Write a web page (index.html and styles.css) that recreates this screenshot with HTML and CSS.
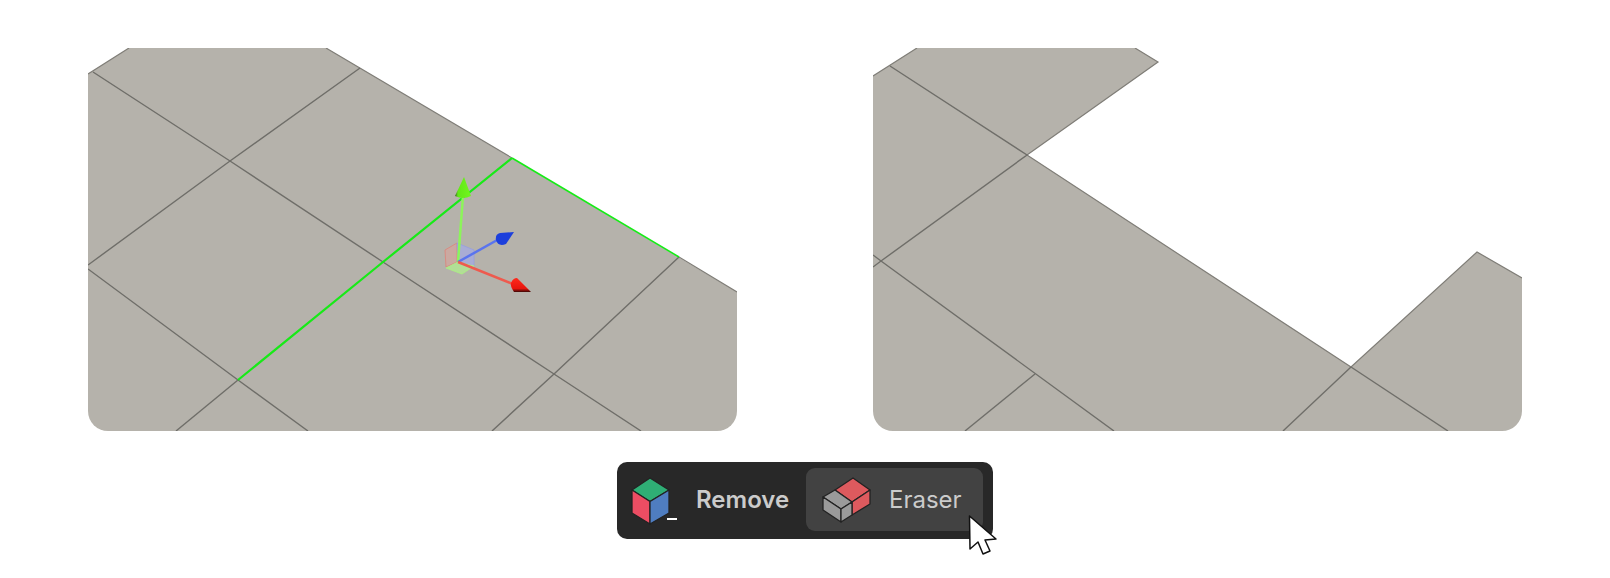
FILE: index.html
```html
<!DOCTYPE html>
<html lang="en">
<head>
    <meta charset="UTF-8">
    <meta name="viewport" content="width=device-width, initial-scale=1.0">
    <title>Remove with Eraser</title>
    <link rel="stylesheet" href="styles.css">
</head>
<body>
    <div class="views">
        <!-- before: edge picked, gizmo showing -->
        <svg class="view" viewBox="88 48 649 383">
            <defs>
                <linearGradient id="coneRed" x1="0" y1="0" x2="0" y2="1">
                    <stop offset="0" stop-color="#ff2a1c"/>
                    <stop offset="0.75" stop-color="#e8160e"/>
                    <stop offset="1" stop-color="#3a0806"/>
                </linearGradient>
                <linearGradient id="coneGreen" x1="1" y1="0" x2="0" y2="0">
                    <stop offset="0" stop-color="#72f51e"/>
                    <stop offset="0.82" stop-color="#62e818"/>
                    <stop offset="1" stop-color="#3a5a22"/>
                </linearGradient>
            </defs>
            <path class="sheet" d="M88 74 L129 48 H326 L737 292 V411 A20 20 0 0 1 717 431 H108 A20 20 0 0 1 88 411 Z"/>
            <path class="edge" d="M88 74 L129 48 M326 48 L512 158 M679 257 L737 292"/>
            <path class="grid" d="M93 72 L230 161 L383 262 L554 374 L641 431"/>
            <path class="grid" d="M360 68 L230 161 L88 265"/>
            <path class="grid" d="M88 269 L238 380 L308 431"/>
            <path class="grid" d="M238 380 L176 431"/>
            <path class="grid" d="M679 257 L554 374 L492 431"/>
            <path class="picked" d="M512 158 L383 262 L238 380"/>
            <path class="picked thin" d="M512 158 L679 257"/>

            <path class="plane plane-red" d="M445 250 L457 243 V262 L446 267 Z"/>
            <path class="plane plane-blue" d="M457 243 L474 250 V266 L458 262 Z"/>
            <path class="plane plane-green" d="M458 262 L474 266 L462 274 L446 268 Z"/>
            <path class="axis axis-green" d="M458 262 L463 196"/>
            <path class="axis axis-blue" d="M458 262 L499 239"/>
            <path class="axis axis-red" d="M458 262 L513 284"/>
            <path fill="url(#coneGreen)" d="M464 177 L471 196 Q463 200 455 196 Z"/>
            <path class="cone-blue" d="M500 233 L514 232 L506 244 Q498 247 496 240 Q495 234 500 233 Z"/>
            <path fill="url(#coneRed)" d="M517 278 L531 292 H514 Q510 286 511 283 Q513 278 517 278 Z"/>
        </svg>

        <!-- after: face gone -->
        <svg class="view" viewBox="873 48 649 383">
            <path class="sheet" d="M873 76 L917 48 H1135 L1158 62 L1027 155 L1351 367 L1477 252 L1522 278 V411 A20 20 0 0 1 1502 431 H893 A20 20 0 0 1 873 411 Z"/>
            <path class="edge" d="M873 76 L917 48 M1135 48 L1158 62 L1027 155 L1351 367 L1477 252 L1522 278"/>
            <path class="grid" d="M890 66 L1027 155 L881 261 L873 267"/>
            <path class="grid" d="M873 255 L881 261 L1114 431"/>
            <path class="grid" d="M1035 374 L965 431"/>
            <path class="grid" d="M1351 367 L1283 431"/>
            <path class="grid" d="M1351 367 L1448 431"/>
        </svg>
    </div>

    <div class="toolbar">
        <svg class="tool-icon" width="45" height="46" viewBox="632 477 45 46">
            <path class="cube-top" d="M650 477 L669 489 L650 500.500 L632 489 Z"/>
            <path class="cube-left" d="M632 489 L650 500.500 V523 L632 512 Z"/>
            <path class="cube-right" d="M669 489 L650 500.500 V523 L669 512 Z"/>
            <rect class="cube-dash" x="667" y="517" width="10" height="2"/>
        </svg>
        <span class="tool-group">Remove</span>
        <div class="tool-button">
            <svg class="tool-icon" width="47" height="44" viewBox="823 477 47 44">
                <path class="eraser-red" d="M835 489 L853 477 L870 489 L852 501 Z"/>
                <path class="eraser-red" d="M852 501 L870 489 V503 L852 514 Z"/>
                <path class="eraser-grey" d="M823 496 L835 489 L852 501 L841 508 Z"/>
                <path class="eraser-grey" d="M823 496 L841 508 V521 L823 509 Z"/>
                <path class="eraser-grey" d="M841 508 L852 501 V514 L841 521 Z"/>
            </svg>
            <span class="tool-name">Eraser</span>
        </div>
        <svg class="pointer" width="34" height="46" viewBox="965 512 34 46">
            <path d="M969.500 516 L970 549 L978 542 L983 554 L990 551 L985 540 L996 539 Z"/>
        </svg>
    </div>
</body>
</html>
```

FILE: styles.css
```css
*{margin:0;padding:0;box-sizing:border-box}
html,body{height: 100%}
body{
    background-color: #fff;
    font-family: Inter, "Liberation Sans", sans-serif;
    padding-top: 48px;
}
.views{
    display: flex;
    justify-content: center;
    gap: 136px;
}
.view{
    display: block;
    width: 649px;
    height: 383px;
}
.sheet{fill: #b5b2ab; stroke: none}
.edge{fill: none; stroke: #7f7d77; stroke-width: 1.200}
.grid{fill: none; stroke: #6f6e69; stroke-width: 1.400}
.picked{fill: none; stroke: #17ea17; stroke-width: 2.200}
.picked.thin{stroke-width: 1.600}

.plane{stroke-width: 1}
.plane-red{fill: rgba(215,165,155,.65); stroke: rgba(226,125,115,.7)}
.plane-blue{fill: rgba(165,170,225,.75); stroke: rgba(145,155,230,.7)}
.plane-green{fill: rgba(178,232,145,.8); stroke: rgba(170,240,130,.85)}
.axis{fill: none; stroke-width: 2.500}
.axis-green{stroke: #8cf55a}
.axis-blue{stroke: #5a74ee}
.axis-red{stroke: #ee5a4e}
.cone-blue{fill: #1c3fdc}

.toolbar{
    position: relative;
    display: flex;
    align-items: center;
    width: 376px;
    height: 77px;
    margin: 31px auto 0;
    padding: 0 10px 0 15px;
    background-color: #282828;
    border-radius: 10px;
    color: #cbcbcb;
    font-size: 24px;
}
.tool-icon{display: block; flex: none; overflow: visible}
.tool-group{
    font-weight: 600;
    margin-left: 19px;
    margin-top: -2px;
}
.tool-button{
    display: flex;
    align-items: center;
    gap: 19px;
    width: 177px;
    height: 63px;
    margin-left: auto;
    margin-top: -2px;
    padding-left: 17px;
    background-color: #424242;
    border-radius: 9px;
}
.tool-name{font-weight: 400}

.cube-top,.cube-left,.cube-right,.eraser-red,.eraser-grey{
    stroke: #222;
    stroke-width: 1.300;
    stroke-linejoin: round;
}
.cube-top{fill: #2fae75}
.cube-left{fill: #ec4d63}
.cube-right{fill: #4f7dc0}
.cube-dash{fill: #fff}
.eraser-red{fill: #dd5a5e}
.eraser-grey{fill: #9a9a9a}

.pointer{
    position: absolute;
    left: 348px;
    top: 50px;
    overflow: visible;
}
.pointer path{
    fill: #fff;
    stroke: #111;
    stroke-width: 1.500;
    stroke-linejoin: round;
}
```
